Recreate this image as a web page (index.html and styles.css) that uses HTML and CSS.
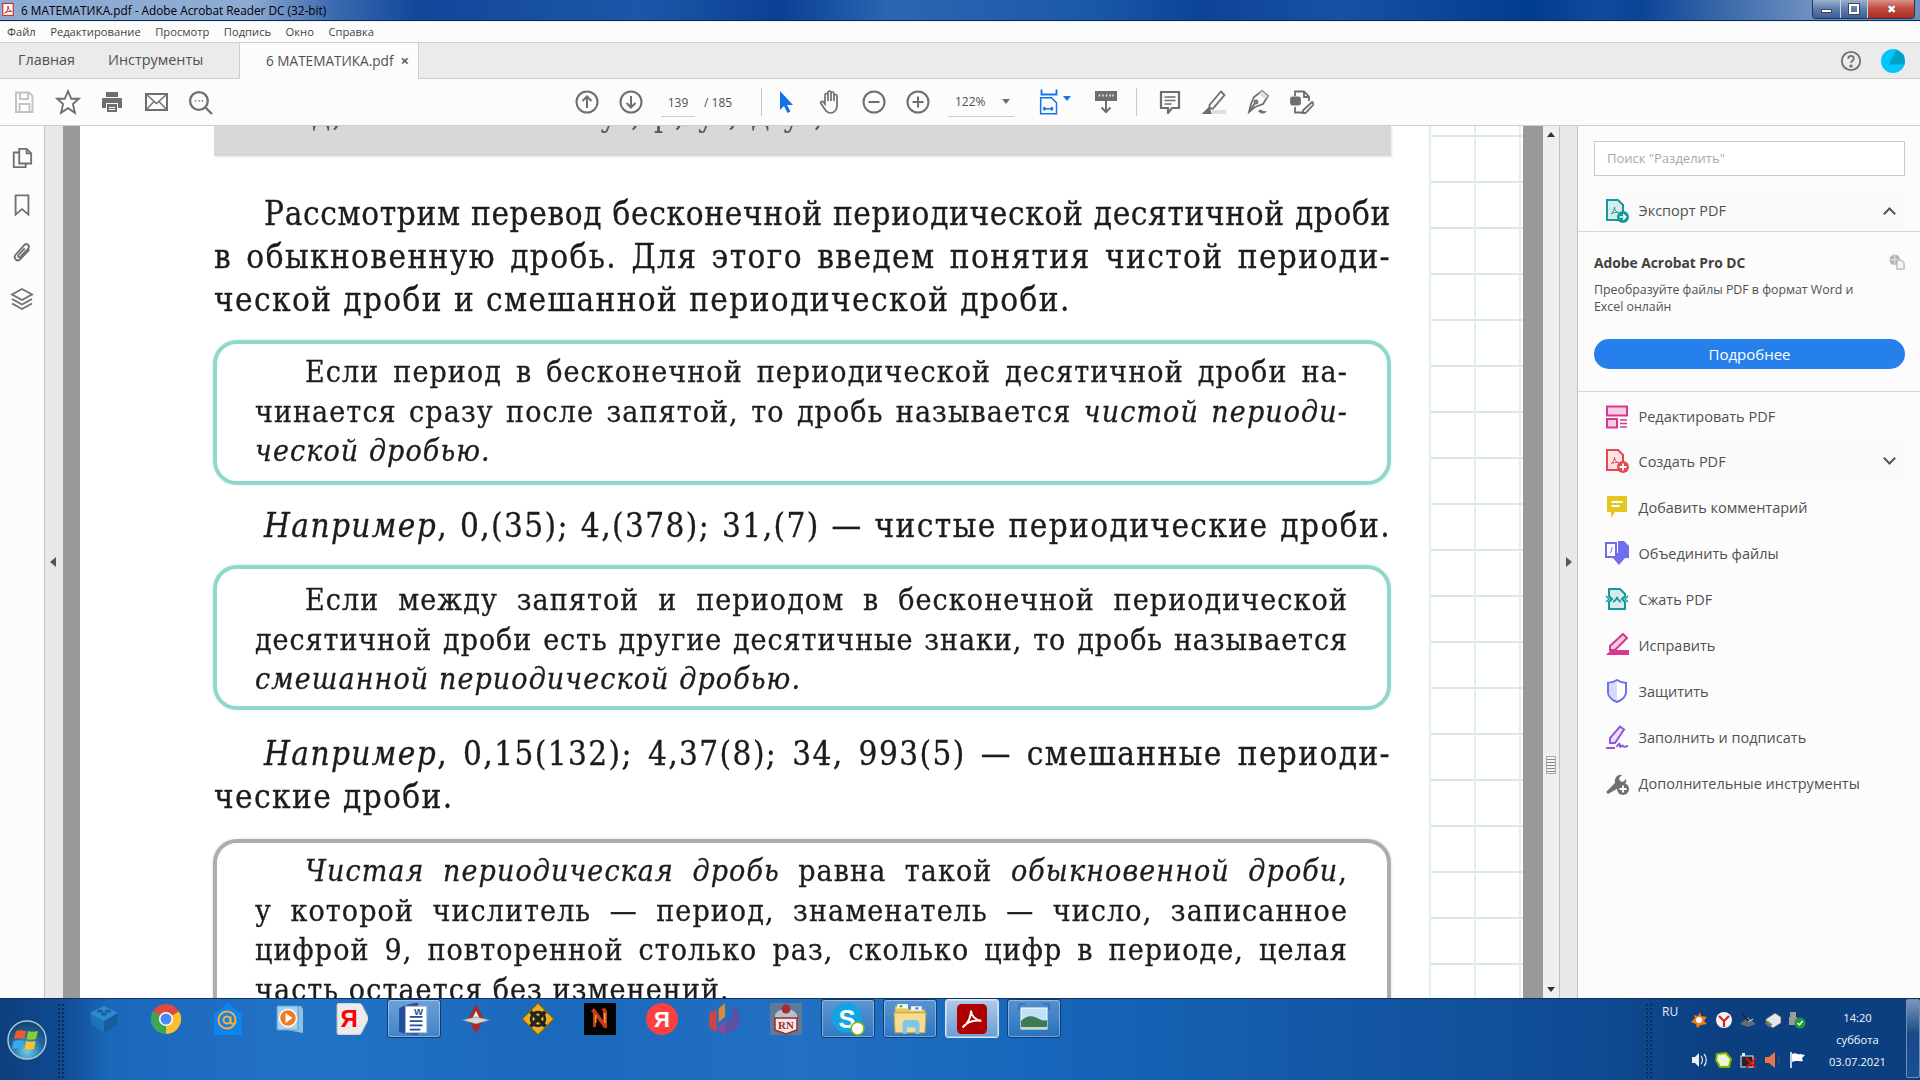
FILE: index.html
```html
<!DOCTYPE html>
<html lang="ru">
<head>
<meta charset="utf-8">
<title>6 МАТЕМАТИКА.pdf - Adobe Acrobat Reader DC (32-bit)</title>
<link rel="stylesheet" href="styles.css">
</head>
<body>
<div class="app">
  <header class="titlebar">
    <svg class="app-ico" viewBox="0 0 16 18" width="12" height="15"><rect x="1" y="1" width="14" height="16" fill="#fff" stroke="#c9302c" stroke-width="1.6"/><path d="M3.5 14c3-1.500 5-6 4.500-9.500 0 3.500 2 6.500 5 7-3.500-.5-7 .5-9.500 2.500z" fill="none" stroke="#d01010" stroke-width="1.200"/></svg>
    <span class="title-text">6 МАТЕМАТИКА.pdf - Adobe Acrobat Reader DC (32-bit)</span>
    <div class="winctl">
      <span class="wbtn wmin"><i class="min-glyph"></i></span>
      <span class="wbtn wmax"><i class="max-glyph"></i></span>
      <span class="wbtn wclose">✖</span>
    </div>
  </header>
  <nav class="menubar">
    <span>Файл</span><span>Редактирование</span><span>Просмотр</span><span>Подпись</span><span>Окно</span><span>Справка</span>
  </nav>
  <div class="tabs">
    <span class="tab tab-home">Главная</span>
    <span class="tab tab-tools">Инструменты</span>
    <span class="tab-active"><span>6 МАТЕМАТИКА.pdf</span><b class="tab-x">×</b></span>
    <span class="tabs-right">
      <svg viewBox="0 0 24 24" width="22" height="22" fill="none" stroke="#707070" stroke-width="2"><circle cx="12" cy="12" r="10"/><path d="M9 9.500c0-4 6-4 6 0 0 2-3 2.500-3 4.500" stroke-width="1.900"/><circle cx="12" cy="17.500" r=".8" fill="#707070"/></svg>
      <svg class="avatar" viewBox="0 0 24 24" width="24" height="24"><circle cx="12" cy="12" r="12" fill="#00c8ff"/><path d="M15 0.500 L23 6 24 15.500 8 15.500z" fill="#00a0c8"/></svg>
    </span>
  </div>
  <div class="toolbar">
    <div class="tb-btn"><svg viewBox="0 0 24 24" width="24" height="24" fill="none" stroke="#c4c4c4" stroke-width="2"><path d="M4 2.500h13l3.500 3.500v16H4z"/><path d="M8 3v6h8V3M7.500 22v-8h10v8"/></svg></div>
    <div class="tb-btn"><svg viewBox="0 0 24 24" width="26" height="26" fill="none" stroke="#6e6e6e" stroke-width="1.700"><path d="M12 2l3 7h7l-5.500 5 2 8-6.500-4.300L5.500 22l2-8L2 9h7z"/></svg></div>
    <div class="tb-btn"><svg viewBox="0 0 24 24" width="24" height="24" fill="#6e6e6e"><path d="M6 2h12v5H6z"/><path d="M3 8h18a1 1 0 0 1 1 1v9h-4v-5H6v5H2V9a1 1 0 0 1 1-1z"/><path d="M7 14h10v8H7zM9 17h6v1H9zM9 19h6v1H9z" fill-rule="evenodd"/></svg></div>
    <div class="tb-btn"><svg viewBox="0 0 24 24" width="25" height="24" fill="none" stroke="#6e6e6e" stroke-width="2"><rect x="1.500" y="4" width="21" height="16"/><path d="M2 4.500l10 9 10-9M2 19.500l7.500-8M22 19.500l-7.500-8" stroke-width="1.400"/></svg></div>
    <div class="tb-btn"><svg viewBox="0 0 24 24" width="25" height="25" fill="none" stroke="#6e6e6e" stroke-width="2.200"><circle cx="10.500" cy="10.500" r="8.500"/><path d="M17 17l6 6"/><path d="M6.500 10.500h1.500M10 10.500h1.500M13 10.500h1.500" stroke-width="1.300"/></svg></div>
    <div class="tb-spacer-a"></div>
    <div class="tb-btn"><svg viewBox="0 0 24 24" width="24" height="24" fill="none" stroke="#6e6e6e" stroke-width="2"><circle cx="12" cy="12" r="10.500"/><path d="M12 18V6.500M7.500 11L12 6.500l4.500 4.500"/></svg></div>
    <div class="tb-btn"><svg viewBox="0 0 24 24" width="24" height="24" fill="none" stroke="#6e6e6e" stroke-width="2"><circle cx="12" cy="12" r="10.500"/><path d="M12 6v11.500M7.500 13l4.500 4.500 4.500-4.500"/></svg></div>
    <div class="page-field"><span class="page-num">139</span><span class="page-total">/ 185</span></div>
    <div class="tb-sep sep-a"></div>
    <div class="tb-btn"><svg viewBox="0 0 24 24" width="24" height="24" fill="#1473e6"><path d="M6 1l13 14h-6l3.500 6.500-3 1.500-3.500-7L6 20z"/></svg></div>
    <div class="tb-btn"><svg viewBox="0 0 24 26" width="24" height="26" fill="none" stroke="#6e6e6e" stroke-width="1.700"><path d="M7 15V6a1.500 1.500 0 0 1 3 0v6V3.500a1.500 1.500 0 0 1 3 0V12 4.500a1.500 1.500 0 0 1 3 0V12 7a1.500 1.500 0 0 1 3 0v10c0 4-3 7-6.500 7S8 22 6 19l-3-4.500c-1-1.500 1-3 2.500-1.500z"/></svg></div>
    <div class="tb-btn"><svg viewBox="0 0 24 24" width="24" height="24" fill="none" stroke="#6e6e6e" stroke-width="2"><circle cx="12" cy="12" r="10.500"/><path d="M6.500 12h11"/></svg></div>
    <div class="tb-btn"><svg viewBox="0 0 24 24" width="24" height="24" fill="none" stroke="#6e6e6e" stroke-width="2"><circle cx="12" cy="12" r="10.500"/><path d="M6.500 12h11M12 6.500v11"/></svg></div>
    <div class="zoom-field"><span>122%</span><i class="caret"></i></div>
    <div class="tb-fit"><svg viewBox="0 0 24 30" width="20" height="26" fill="none" stroke="#1473e6" stroke-width="2.200"><path d="M3 0v6h18V0"/><path d="M2 10h13l6 6v13H2zM5 23h12M5 23l2.500-2M5 23l2.500 2M17 23l-2.500-2M17 23l-2.500 2" stroke-width="1.800"/></svg><i class="caret blue"></i></div>
    <div class="tb-btn tb-ruler"><svg viewBox="0 0 24 24" width="24" height="24" fill="none" stroke="#6e6e6e" stroke-width="2"><rect x="2" y="2" width="20" height="8" fill="#6e6e6e"/><path d="M5.500 4.500v2M9 4.500v2M12.500 4.500v2M16 4.500v2M19 4.500v2" stroke="#fff" stroke-width="1.300"/><path d="M12 11v11M7.500 17.500L12 22l4.500-4.500"/></svg></div>
    <div class="tb-sep sep-b"></div>
    <div class="tb-btn"><svg viewBox="0 0 24 24" width="24" height="24" fill="none" stroke="#6e6e6e" stroke-width="2.200"><path d="M3 2h18v16h-7l-4 5v-5H3z"/><path d="M6.500 7h11M6.500 10.500h11M6.500 14h7" stroke-width="1.300"/></svg></div>
    <div class="tb-btn"><svg viewBox="0 0 24 24" width="24" height="24" fill="none" stroke="#6e6e6e" stroke-width="1.800"><path d="M19 1.500l3.500 3.500L11 18.500H7.500V15z"/><path d="M2 23l5-5 1.500 5z" fill="#6e6e6e"/><rect x="10" y="20" width="14" height="4" fill="#dedede" stroke="none"/></svg></div>
    <div class="tb-btn"><svg viewBox="0 0 24 24" width="24" height="24" fill="none" stroke="#6e6e6e" stroke-width="1.800"><path d="M16 1l6 5-5 8-8 3-6 5 2-8 3-7z"/><circle cx="10" cy="12" r="1.500"/><path d="M3 22L9 13M13 22c1-2 2-2 2 0s2-2 2 0 2-1 3 0"/><path d="M16 1l6 5-3 3-6-5z" fill="#dedede" stroke="none"/></svg></div>
    <div class="tb-btn"><svg viewBox="0 0 24 24" width="24" height="24" fill="none" stroke="#6e6e6e" stroke-width="1.800"><path d="M5 6V1.500h9l5 5V11M5 17v5.500h8"/><path d="M14 1.500V7h5"/><rect x="1" y="7.500" width="9" height="7" rx="1.500" fill="#6e6e6e"/><path d="M22 12l2 2-8.500 9H13v-2.500z"/></svg></div>
  </div>

  <main class="workspace">
    <aside class="rail">
      <svg viewBox="0 0 24 24" width="22" height="24" fill="none" stroke="#707070" stroke-width="2"><path d="M9 2h8l5 5v11H9z"/><path d="M17 2v5h5"/><path d="M9 6H3v16h13v-4"/></svg>
      <svg viewBox="0 0 24 24" width="22" height="24" fill="none" stroke="#707070" stroke-width="2"><path d="M5 1.500h14v21l-7-6-7 6z"/></svg>
      <svg viewBox="0 0 24 24" width="22" height="24" fill="none" stroke="#707070" stroke-width="2"><path d="M20 9.500L10 20c-3 3-8-1-5-5L15 4c2-2 6 1 4 4l-9 9.500c-1 1-3-.5-2-2l7-7.500"/></svg>
      <svg viewBox="0 0 24 24" width="24" height="24" fill="none" stroke="#707070" stroke-width="1.800"><path d="M12 2l10 5.500-10 5.500L2 7.500z"/><path d="M2 12l10 5.500L22 12M2 16.500L12 22l10-5.500"/></svg>
    </aside>
    <div class="gutter-left"><i class="arrow-left"></i></div>
    <div class="bar-gray"></div>
    <div class="page-view">
      <div class="page-col">
        <div class="top-box"><div class="clip-line"><span class="clip-a">д,</span><span>у , р, у , д у ,</span></div></div>
        <div class="para first-para">
          <div class="ln ind tight">Рассмотрим перевод бесконечной периодической десятичной дроби</div>
          <div class="ln">в обыкновенную дробь. Для этого введем понятия чистой периоди-</div>
          <div class="ln left">ческой дроби и смешанной периодической дроби.</div>
        </div>
        <section class="rule teal r1">
          <div class="bl ind2">Если период в бесконечной периодической десятичной дроби на-</div>
          <div class="bl">чинается сразу после запятой, то дробь называется <em>чистой периоди-</em></div>
          <div class="bl left"><em>ческой дробью.</em></div>
        </section>
        <div class="para ex1"><div class="ln ind"><em>Например</em>, 0,(35); 4,(378); 31,(7) — чистые периодические дроби.</div></div>
        <section class="rule teal r2">
          <div class="bl ind2">Если между запятой и периодом в бесконечной периодической</div>
          <div class="bl snug">десятичной дроби есть другие десятичные знаки, то дробь называется</div>
          <div class="bl left"><em>смешанной периодической дробью.</em></div>
        </section>
        <div class="para ex2">
          <div class="ln ind"><em>Например</em>, 0,15(132); 4,37(8); 34, 993(5) — смешанные периоди-</div>
          <div class="ln left">ческие дроби.</div>
        </div>
        <section class="rule gray r3">
          <div class="bl ind2"><em>Чистая периодическая дробь</em> равна такой <em>обыкновенной дроби</em>,</div>
          <div class="bl">у которой числитель — период, знаменатель — число, записанное</div>
          <div class="bl">цифрой 9, повторенной столько раз, сколько цифр в периоде, целая</div>
          <div class="bl left">часть остается без изменений.</div>
        </section>
      </div>
      <div class="grid-paper"></div>
    </div>
    <div class="bar-gray bar-right"></div>
    <div class="scrollbar">
      <i class="sc-up"></i>
      <i class="sc-thumb"></i>
      <i class="sc-down"></i>
    </div>
    <div class="gutter-right"><i class="arrow-right"></i></div>
    <aside class="panel">
      <div class="search">Поиск "Разделить"</div>
      <div class="row accent export">
        <svg class="pi" viewBox="0 0 24 24" width="24" height="24"><path d="M2 1h11l5 5v15H2z" fill="#d5ecea" stroke="#159a9c" stroke-width="2"/><path d="M6 15c2-1.500 3.500-4 3.500-7 0 3 1.500 5 4 5.500-3-.3-5.500 0-7.500 1.500z" fill="none" stroke="#159a9c"/><circle cx="18" cy="18" r="6" fill="#159a9c"/><path d="M14.500 18h6M18 15.300l2.800 2.700-2.800 2.700" fill="none" stroke="#fff" stroke-width="1.500"/></svg>
        <span>Экспорт PDF</span><i class="chev up"></i>
      </div>
      <div class="promo">
        <div class="promo-head"><strong>Adobe Acrobat Pro DC</strong>
          <svg viewBox="0 0 18 18" width="16" height="16"><circle cx="6.500" cy="6.500" r="6" fill="#b5b5b5"/><path d="M1 6.500h11M6.500 1v11" stroke="#eee"/><path d="M9 7h5l3 3v7H9z" fill="#f4f4f4" stroke="#b0b0b0" stroke-width="1.300"/></svg>
        </div>
        <p class="promo-text">Преобразуйте файлы PDF в формат Word и<br>Excel онлайн</p>
        <div class="cta">Подробнее</div>
      </div>
      <div class="tools">
        <div class="row first-row"><svg class="pi" viewBox="0 0 24 24" width="24" height="24" fill="none" stroke="#d83790" stroke-width="2"><rect x="2" y="1.500" width="20" height="9" fill="#f6cfe4"/><rect x="2" y="14" width="10" height="8.500" fill="#f6cfe4"/><path d="M15 15h7M15 18.500h7M15 22h7" stroke-width="1.300"/></svg><span>Редактировать PDF</span></div>
        <div class="row accent"><svg class="pi" viewBox="0 0 24 24" width="24" height="24"><path d="M2 1h11l5 5v15H2z" fill="#fbe4e5" stroke="#e34850" stroke-width="2"/><path d="M6 15c2-1.500 3.500-4 3.500-7 0 3 1.500 5 4 5.500-3-.3-5.500 0-7.500 1.500z" fill="none" stroke="#e34850"/><circle cx="18" cy="18" r="6" fill="#e34850"/><path d="M14.500 18h7M18 14.500v7" stroke="#fff" stroke-width="1.800"/></svg><span>Создать PDF</span><i class="chev down"></i></div>
        <div class="row"><svg class="pi" viewBox="0 0 24 24" width="24" height="24"><path d="M2 1h20v16H10l-4 6v-6H2z" fill="#e5c51f"/><path d="M6.500 7h11M6.500 11h8" stroke="#fff" stroke-width="2"/></svg><span>Добавить комментарий</span></div>
        <div class="row"><svg class="pi" viewBox="0 0 24 24" width="24" height="24"><path d="M1 2h10v14H1z" fill="#fff" stroke="#6e6ef0" stroke-width="2"/><path d="M13 0h6l5 5v12H13z" fill="#6e6ef0"/><path d="M5 12c1-1 2-3 2-6" fill="none" stroke="#6e6ef0"/><path d="M11 12h6v5h3l-6 7-6-7h3z" fill="#6e6ef0"/></svg><span>Объединить файлы</span></div>
        <div class="row"><svg class="pi" viewBox="0 0 24 24" width="24" height="24" fill="none" stroke="#159a9c" stroke-width="2"><path d="M4 9V2h11l5 5v2l-3 3 3 3v7H4v-7l3-3z" fill="#d5ecea"/><path d="M8 15c2-1 3.500-2.500 4-5 .5 2.500 2 4 4 5M1 9l3 3-3 3M23 9l-3 3 3 3" stroke-width="1.500"/></svg><span>Сжать PDF</span></div>
        <div class="row"><svg class="pi" viewBox="0 0 24 24" width="24" height="24"><path d="M18 1l4 4L10 17H5v-4z" fill="#f6cfe4" stroke="#d83790" stroke-width="2"/><path d="M1 22l5-5h18v5z" fill="#d83790"/></svg><span>Исправить</span></div>
        <div class="row"><svg class="pi" viewBox="0 0 24 24" width="24" height="24"><path d="M12 1c3 2 6 3 9 3v9c0 5-4 8-9 10-5-2-9-5-9-10V4c3 0 6-1 9-3z" fill="#fff" stroke="#6e6ef0" stroke-width="2"/><path d="M12 2.500v19c-4.500-2-8-4.500-8-8.500V5c3 0 5.500-1 8-2.500z" fill="#d9d9fb"/></svg><span>Защитить</span></div>
        <div class="row"><svg class="pi" viewBox="0 0 24 24" width="24" height="24" fill="none" stroke="#9256d9" stroke-width="2"><path d="M15 1.500l4 3L10 18H5v-5z" fill="#ecdffa"/><path d="M1 23h9M12 22c1-4 3-4 3-1s2-2 3 0 3 0 5 0"/></svg><span>Заполнить и подписать</span></div>
        <div class="row"><svg class="pi" viewBox="0 0 24 24" width="24" height="24" fill="#707070"><path d="M3 23l-2-2 9-9c-1-4 2-9 7-8l-3 3 1 3 3 1 3-3c1 3-1 6-4 7z"/><circle cx="18" cy="18" r="6"/><path d="M14.500 18h7M18 14.500v7" stroke="#fff" stroke-width="1.800"/></svg><span>Дополнительные инструменты</span></div>
      </div>
    </aside>
  </main>

  <footer class="taskbar">
    <div class="start">
      <svg viewBox="0 0 40 40" width="40" height="40"><defs><radialGradient id="orb" cx=".5" cy=".8" r=".75"><stop offset="0" stop-color="#6fd0ea"/><stop offset=".55" stop-color="#1e6c9f"/><stop offset="1" stop-color="#14456f"/></radialGradient></defs><circle cx="20" cy="20" r="19" fill="url(#orb)" stroke="#a8c6d8" stroke-width="1.500"/><path d="M9 11c3-1 6-1 10 0l-1.500 8c-3-1-7-1-10.500 0z" fill="#f0592c"/><path d="M21 11c3 1 7 1 10 0l-2 8c-3 1-7 1-9.500 0z" fill="#8ccb34"/><path d="M6.500 21c3-1 7-1 10.500 0l-1.500 8c-3-1-7-1-10.500 0z" fill="#3aa9e8"/><path d="M19 21c3 1 6 1 9.500 0l-1.500 8c-3 1-7 1-9.500 0z" fill="#fcc22c"/></svg>
    </div>
    <i class="gripper"></i>
    <div class="pins">
      <div class="pin"><svg viewBox="0 0 32 32" width="32" height="32"><path d="M2 10l14-7 14 7-1 12-13 8-12-8z" fill="#1e74b8"/><path d="M2 10l14 8 14-8-14-7z" fill="#2b8ad0"/><path d="M16 18v12l13-8 1-12z" fill="#175d9a"/><ellipse cx="12" cy="8" rx="3" ry="1.500" fill="#175d9a"/><ellipse cx="20" cy="8" rx="3" ry="1.500" fill="#175d9a"/><ellipse cx="16" cy="11" rx="3" ry="1.500" fill="#175d9a"/></svg></div>
      <div class="pin"><svg viewBox="0 0 32 32" width="32" height="32"><circle cx="16" cy="16" r="15" fill="#dd4b3e"/><path d="M16 16L29 8.500A15 15 0 0 1 16 31z" fill="#fbc02d"/><path d="M16 16L16 31A15 15 0 0 1 3 8.500z" fill="#3aa757"/><circle cx="16" cy="16" r="7" fill="#fff"/><circle cx="16" cy="16" r="5.500" fill="#4a8af4"/></svg></div>
      <div class="pin"><svg viewBox="0 0 32 32" width="32" height="34"><path d="M16 0l15 12h-1v20H2V12H1z" fill="#0b84f2"/><circle cx="15" cy="17" r="8.500" fill="none" stroke="#ffa930" stroke-width="2"/><circle cx="15" cy="17" r="3.500" fill="none" stroke="#ffa930" stroke-width="2"/><path d="M18.500 13.500v5c0 3 4 3 5 0" fill="none" stroke="#ffa930" stroke-width="2"/></svg></div>
      <div class="pin"><svg viewBox="0 0 32 32" width="32" height="32"><path d="M7 3h20l2 3v24l-22-4z" fill="#8fc0e4"/><path d="M3 3h21v24H3z" fill="#a8d3ef" stroke="#5d9ccb"/><circle cx="14" cy="15" r="8.500" fill="#ef7a22" stroke="#fff" stroke-width="1.500"/><path d="M11.500 10l7 5-7 5z" fill="#fff"/></svg></div>
      <div class="pin"><svg viewBox="0 0 32 32" width="32" height="32"><path d="M3 0h19c2 0 3 1 4 2l6 12c.5 1 .5 2 0 3l-6 12c-1 2-2 3-4 3H3a2 2 0 0 1-2-2V2a2 2 0 0 1 2-2z" fill="#ececec" stroke="#bbb"/><text x="13" y="24" class="ya-text">Я</text></svg></div>
      <div class="pin pin-btn word"><svg viewBox="0 0 32 32" width="36" height="34"><path d="M2 6c5-3 12-5 18-5v30C13 31 7 30 2 28z" fill="#244b9c"/><path d="M8 4h20v25H8z" fill="#fff" stroke="#9fb7d8"/><path d="M12 14h12M12 18h12M12 22h12M12 26h10" stroke="#244b9c" stroke-width="1.500"/><text x="16" y="12" class="w-text">W</text></svg></div>
      <div class="pin"><svg viewBox="0 0 32 32" width="32" height="32"><path d="M16 1l8 15-8 15-8-15z" fill="#a72a2e"/><path d="M16 8l4 8H12z" fill="#eee"/><path d="M2 17l14-3 14 3-14 4z" fill="#d6d6d6" stroke="#777" stroke-width=".6"/></svg></div>
      <div class="pin"><svg viewBox="0 0 32 32" width="34" height="34"><path d="M16 1l15 15-15 15L1 16z" fill="#e8b021" stroke="#7a5d10"/><path d="M9 9l14 14M23 9L9 23" stroke="#222" stroke-width="3.500"/><circle cx="16" cy="16" r="6.500" fill="none" stroke="#222" stroke-width="2.500"/></svg></div>
      <div class="pin"><svg viewBox="0 0 32 32" width="32" height="32"><rect width="32" height="32" fill="#040404"/><path d="M9 24V10l-2-2 3-3 9 12V8l-2-2 4-1 2 3v17h-3l-8-11v10z" fill="#c63c14"/><path d="M20 10h1.500v10H20zM11 12h1.500v8H11z" fill="#f0a030"/></svg></div>
      <div class="pin"><svg viewBox="0 0 32 32" width="32" height="32"><circle cx="16" cy="16" r="16" fill="#fc3f3f"/><text x="16" y="24" class="ya-white">Я</text></svg></div>
      <div class="pin"><svg viewBox="0 0 32 32" width="34" height="34"><path d="M9 7v22L2 24V10z" fill="#c9454c"/><path d="M11 6l6-5v13l-6 5z" fill="#d68a3c"/><path d="M18 19l6-5V4l6 5v14l-12 8z" fill="#5f4fa1"/><path d="M11 22l6-4v13l-6-3z" fill="#8a4a9a"/></svg></div>
      <div class="pin"><svg viewBox="0 0 32 32" width="32" height="32"><rect width="32" height="32" fill="#5d7a99"/><path d="M5 12c2-4 6-6 11-6s9 2 11 6v3H5z" fill="#b8c2cc"/><circle cx="16" cy="6" r="4.500" fill="#ab2b2e"/><path d="M5 15h22v12l-11 4-11-4z" fill="#f2ebe5" stroke="#a3262c" stroke-width="1.500"/><text x="16" y="26" class="rn-text">RN</text></svg></div>
      <div class="pin pin-btn"><svg viewBox="0 0 32 32" width="34" height="34"><circle cx="15" cy="15" r="14" fill="#12a5e6"/><text x="15" y="24" class="s-text">S</text><circle cx="25" cy="25" r="6" fill="#fff" stroke="#7fba00" stroke-width="1.500"/></svg></div>
      <div class="pin pin-btn"><svg viewBox="0 0 32 32" width="36" height="34"><path d="M2 4h11l2 3h15v20H2z" fill="#e8c860"/><path d="M4 2h10v4H4z" fill="#fff"/><path d="M6 3h3v2H6z" fill="#3ab53a"/><path d="M17 4h10v4H17z" fill="#f8f8f8"/><path d="M21 5h3v2h-3z" fill="#2a90e0"/><path d="M1 10h30l-1 19H2z" fill="#f5dc8e" stroke="#c9a84a"/><path d="M9 30v-9c0-3 2-4 4-4h8c2 0 4 1 4 4v9h-4v-6H13v6z" fill="#7ec7ea"/></svg></div>
      <div class="pin pin-btn active"><svg viewBox="0 0 32 32" width="30" height="30"><rect width="32" height="32" rx="5" fill="#af0000"/><path d="M6 25c5-3 9-11 9-18 0 5 4 10 11 11-7-1-15 1-20 7z" fill="none" stroke="#fff" stroke-width="2.200"/></svg></div>
      <div class="pin pin-btn"><svg viewBox="0 0 32 32" width="32" height="32"><path d="M1 1h6M1 1v6M31 1h-6M31 1v6M1 31h6M1 31v-6M31 31h-6M31 31v-6" stroke="#3679ac" stroke-width="2" fill="none"/><rect x="3" y="5" width="26" height="21" fill="#bfe1f5" stroke="#fff"/><path d="M3 18c5-5 10-6 16-3s8 3 10 2v9H3z" fill="#3d7a56"/><path d="M3 24h26v2H3z" fill="#cfd8c8"/></svg></div>
    </div>
    <div class="tray">
      <i class="gripper tray-grip"></i>
      <span class="lang">RU</span>
      <div class="tray-icons">
        <svg viewBox="0 0 18 18" width="18" height="18"><path d="M10 1l1 4 6 1-3 4 3 3-6 1-4 3-1-4-5-2 4-4-1-3 4 1z" fill="#f47a14"/><circle cx="9" cy="9" r="3" fill="#fff"/></svg>
        <svg viewBox="0 0 18 18" width="18" height="18"><circle cx="9" cy="9" r="8" fill="#f4f4f4"/><path d="M4 5l5 5 5-5M9 10v6" fill="none" stroke="#e02020" stroke-width="2.200"/></svg>
        <svg viewBox="0 0 18 18" width="18" height="18"><path d="M1 13l8-7 8 7-8 3z" fill="#5c6d80"/><path d="M3 2l7 9" stroke="#222" stroke-width="1.500"/><path d="M9 11l5-3" stroke="#ddd"/></svg>
        <svg viewBox="0 0 18 18" width="18" height="18"><path d="M2 8l9-6 6 4v6l-8 5-7-4z" fill="#e8e8e8" stroke="#555" stroke-width=".8"/><path d="M1 12l5 4" stroke="#2a70e0" stroke-width="1.200"/><path d="M2 11l5 4" stroke="#d82020" stroke-width="1.200"/><path d="M3 10l5 4" stroke="#20b020" stroke-width="1.200"/></svg>
        <svg viewBox="0 0 18 18" width="18" height="18"><path d="M2 1h6v5h1v8H1V6h1z" fill="#9a9a9a"/><circle cx="12" cy="12" r="5.500" fill="#1d9a3a"/><path d="M9.500 12l2 2 3-4" fill="none" stroke="#fff" stroke-width="1.400"/></svg>
        <svg viewBox="0 0 18 18" width="18" height="18"><path d="M2 6h3l4-4v14l-4-4H2z" fill="#eee"/><path d="M11 5c2 2 2 6 0 8M14 3c3 3 3 9 0 12" fill="none" stroke="#dfe8f0" stroke-width="1.200"/></svg>
        <svg viewBox="0 0 18 18" width="18" height="18"><path d="M2 3l9-1 5 6-2 8-9 0-4-7z" fill="#eef3d0" stroke="#7fb000" stroke-width="2"/></svg>
        <svg viewBox="0 0 18 18" width="18" height="18"><rect x="2" y="5" width="12" height="11" fill="#223" stroke="#eee"/><path d="M3 2h3v3H3z" fill="#eee"/><path d="M7 7l10 10M17 7L7 17" stroke="#e01010" stroke-width="2"/></svg>
        <svg viewBox="0 0 18 18" width="18" height="18"><path d="M1 6h4l6-5v16l-6-5H1z" fill="#e9744a"/><path d="M14 5c1.500 2 1.500 6 0 8" fill="none" stroke="#38507a" stroke-width="1.200"/></svg>
        <svg viewBox="0 0 18 18" width="18" height="18"><path d="M3 1v16" stroke="#fff" stroke-width="1.500"/><path d="M4 3c4-2 5 1 8 0l5 1-3 3 1 3c-4 1-6-1-11 1z" fill="#fff"/></svg>
      </div>
      <div class="clock"><span>14:20</span><span>суббота</span><span>03.07.2021</span></div>
      <i class="show-desktop"></i>
    </div>
  </footer>
</div>
</body>
</html>
```
FILE: styles.css
```css
* { box-sizing: border-box; }
html, body { margin: 0; height: 100%; overflow: hidden; }
body { font-family: "Open Sans", "Noto Sans", sans-serif; background: #fff; color: #505050; }
.app { display: flex; flex-direction: column; width: 1920px; height: 1080px; overflow: hidden; }
i { display: block; font-style: normal; }

.titlebar {
  height: 22px; flex: none; display: flex; align-items: center; padding: 0 3px 2px 2px; gap: 7px;
  border-bottom: 1px solid #e8eef6;
  box-shadow: inset 0 -1px 0 #0b2a55;
  background: linear-gradient(90deg, #8eabd3 0, #8eabd3 250px, #3a69ae 335px, #11479a 420px, #1d56a8 640px, #0a4094 780px, #2c66b2 890px, #1b58a8 1090px, #0c4398 1200px, #1850a4 1340px, #003c92 1530px, #104a9e 1600px, #0a4396 1640px, #6d90c0 1810px);
}
.app-ico { flex: none; }
.title-text { font-size: 11.8px; color: #000; white-space: nowrap; }
.winctl { margin-left: auto; display: flex; height: 20px; margin-top: -1px; margin-right: 2px; align-self: flex-start; border: 1px solid #24365c; border-top: 0; border-radius: 0 0 4px 4px; overflow: hidden; }
.wbtn { display: flex; align-items: center; justify-content: center; height: 19px; color: #fff; font-size: 11px; border-left: 1px solid #c6d3e6; }
.wmin { width: 27px; border-left: 0; background: linear-gradient(#a4b7d4, #5f7fae 50%, #3a5f97); }
.wmax { width: 27px; background: linear-gradient(#a4b7d4, #5f7fae 50%, #3a5f97); }
.wclose { width: 47px; background: linear-gradient(#d99b94, #c24a3d 50%, #a92d22); text-shadow: 0 0 1px #333; }
.min-glyph { width: 11px; height: 4px; background: #fff; border: 1px solid #445; margin-top: 5px; }
.max-glyph { width: 10px; height: 10px; background: transparent; border: 2px solid #fff; box-shadow: 0 0 0 1px #445; }

.menubar { height: 21px; flex: none; display: flex; align-items: center; gap: 14.5px; padding: 0 0 2px 7px; background: #fcfcfc; border-bottom: 1px solid #cfcfcf; font-size: 11.2px; color: #444; }
.tabs { height: 36px; flex: none; display: flex; align-items: stretch; background: #ebebeb; border-bottom: 1px solid #cdcdcd; font-size: 14.4px; color: #505050; }
.tab { display: flex; align-items: center; padding-bottom: 2px; }
.tab-home { margin-left: 18px; width: 90px; }
.tab-tools { width: 131px; }
.tab-active { width: 180px; background: #fcfcfc; border-left: 1px solid #cdcdcd; border-right: 1px solid #cdcdcd; margin-bottom: -1px; display: flex; align-items: center; padding: 0 0 2px 26px; gap: 7px; white-space: nowrap; font-size: 13.6px; }
.tab-x { font-size: 15px; color: #606060; }
.tabs-right { margin-left: auto; display: flex; align-items: center; gap: 19px; padding-right: 15px; }

.toolbar { height: 47px; flex: none; display: flex; align-items: center; padding-left: 2px; background: #fcfcfc; border-bottom: 1px solid #cdcdcd; }
.tb-btn { width: 44px; height: 46px; display: flex; align-items: center; justify-content: center; flex: none; }
.tb-spacer-a { width: 343px; flex: none; }
.tb-sep { width: 1px; height: 28px; background: #c8c8c8; flex: none; }
.sep-a { margin-right: 2px; }
.sep-b { margin-left: 8px; margin-right: 11px; }
.page-field { width: 108px; display: flex; align-items: center; font-size: 12px; color: #505050; gap: 9px; padding-left: 8px; flex: none; }
.page-num { width: 34px; height: 29px; line-height: 29px; text-align: center; border-bottom: 1px solid #cdcdcd; }
.zoom-field { width: 66px; height: 29px; margin-left: 8px; border-bottom: 1px solid #cdcdcd; display: flex; align-items: center; justify-content: space-between; padding: 0 4px 0 7px; font-size: 12px; flex: none; }
.caret { width: 0; height: 0; border-left: 4px solid transparent; border-right: 4px solid transparent; border-top: 5px solid #707070; }
.caret.blue { border-top-color: #1473e6; margin-bottom: 8px; }
.tb-fit { margin-left: 25px; width: 38px; display: flex; align-items: center; gap: 4px; flex: none; }
.tb-ruler { margin-left: 7px; }

.workspace { flex: 1; min-height: 0; display: flex; }
.rail { width: 45px; flex: none; background: #fcfcfc; border-right: 1px solid #c0c0c0; display: flex; flex-direction: column; align-items: center; padding-top: 20px; gap: 23px; }
.rail svg { margin-right: 1px; }
.gutter-left { width: 18px; flex: none; background: #e8e8e8; display: flex; align-items: center; justify-content: center; padding-right: 2px; }
.arrow-left { border-top: 5px solid transparent; border-bottom: 5px solid transparent; border-right: 6px solid #555; }
.bar-gray { width: 17px; flex: none; background: #999; }
.bar-right { width: 20px; }

.page-view { width: 1443px; flex: none; background: #fff; display: flex; overflow: hidden; padding-left: 134px; filter: blur(.5px); }
.page-col { width: 1177px; flex: none; font-family: "DejaVu Serif Condensed", "DejaVu Serif", "Liberation Serif", serif; color: #1c1c1c; -webkit-text-stroke: .3px #1c1c1c; }
.grid-paper {
  width: 94px; margin-left: 38px; flex: none;
  background-color: #fff;
  background-image:
    linear-gradient(90deg, #e2f0ed 2px, transparent 2px),
    linear-gradient(#dbe7e4 2px, transparent 2px);
  background-size: 45px 100%, 100% 46px;
  background-position: 0 0, 0 9px;
}
.top-box { height: 30px; background: #d8d8d8; overflow: hidden; box-shadow: 1px 1px 2px #e6e6e6; }
.clip-line { font-size: 33px; line-height: 40px; margin-top: -31px; padding-left: 98px; white-space: nowrap; color: #555; letter-spacing: 2px; -webkit-text-stroke: 0; }
.clip-a { display: inline-block; width: 288px; }
.para { font-size: 33px; line-height: 43px; letter-spacing: 1.4px; }
.first-para { margin-top: 36px; }
.ex1 { margin-top: 19px; }
.ex2 { margin-top: 22px; }
.ln, .bl { text-align: justify; text-align-last: justify; white-space: nowrap; }
.ln.left, .bl.left { text-align-last: left; }
.ln.ind { padding-left: 50px; }
.ln.tight { letter-spacing: .65px; }
.bl { font-size: 30px; line-height: 39.5px; letter-spacing: 1.1px; }
.bl.snug { letter-spacing: .95px; }
.bl.ind2 { padding-left: 50px; }
.rule { margin-left: -1px; width: 1178px; border: 4px solid; border-radius: 24px; padding: 0 39px 0 38px; background: #fff; }
.teal { border-color: #92d8ca; box-shadow: 0 0 3px #cfeee8; }
.gray { border-color: #adadad; box-shadow: 0 0 3px #d8d8d8; }
.r1 { margin-top: 19px; height: 145px; padding-top: 8px; }
.r2 { margin-top: 18px; height: 145px; padding-top: 11px; }
.r3 { margin-top: 21px; height: 190px; padding-top: 8px; }

.scrollbar { width: 17px; flex: none; background: #efefef; border-right: 1px solid #c0c0c0; display: flex; flex-direction: column; align-items: center; padding: 6px 0 6px; }
.sc-up { border-left: 4px solid transparent; border-right: 4px solid transparent; border-bottom: 5px solid #333; }
.sc-thumb { width: 10px; height: 18px; margin-top: 619px; background: repeating-linear-gradient(#f4f4f4 0 2px, #888 2px 3px); border: 1px solid #aaa; }
.sc-down { margin-top: auto; border-left: 4px solid transparent; border-right: 4px solid transparent; border-top: 5px solid #333; }
.gutter-right { width: 18px; flex: none; background: #e8e8e8; border-right: 1px solid #c0c0c0; display: flex; align-items: center; justify-content: center; }
.arrow-right { border-top: 5px solid transparent; border-bottom: 5px solid transparent; border-left: 6px solid #555; }

.panel { flex: 1; background: #fcfcfc; font-size: 14.5px; color: #505050; min-width: 0; }
.search { height: 35px; margin: 15px 15px 0 16px; background: #fff; border: 1px solid #cacaca; padding-left: 12px; line-height: 33px; font-size: 13px; color: #a8a8a8; }
.row { height: 46px; display: flex; align-items: center; margin: 0 15px 0 16px; padding: 0 0 2px 11px; gap: 9.5px; white-space: nowrap; }
.row.accent { background: #fafafa; }
.pi { flex: none; }
.first-row { height: 45px; padding-bottom: 0; }
.export { height: 39px; margin-top: 16px; }
.chev { margin-left: auto; margin-right: 11px; width: 9px; height: 9px; border: solid #505050; border-width: 2px 0 0 2px; }
.chev.up { transform: rotate(45deg); margin-top: 5px; }
.chev.down { transform: rotate(225deg); margin-top: -5px; }
.promo { border-top: 1px solid #d8d8d8; border-bottom: 1px solid #d8d8d8; height: 161px; padding: 20px 15px 0 16px; }
.promo-head { display: flex; justify-content: space-between; align-items: center; height: 20px; }
.promo-head strong { font-size: 13.8px; color: #404040; }
.promo-text { margin: 9px 0 0; font-size: 12.35px; line-height: 17px; color: #505050; }
.cta { height: 30px; margin-top: 24px; border-radius: 15px; background: #2680eb; color: #fff; text-align: center; font-size: 15px; line-height: 30px; }
.tools { padding-top: 2px; }

.taskbar {
  height: 82px; flex: none; position: relative; display: flex; align-items: flex-start; color: #fff;
  border-top: 1px solid #12315a;
  background: linear-gradient(90deg, #0e3f7d 0, #104a90 60px, #1b68bb 110px, #2272c6 300px, #1a69bc 550px, #2170c2 800px, #1666bb 1040px, #1459a8 1300px, #0f4a92 1600px, #0c3f80 1720px, #0c3f80 1920px);
}
.start { width: 57px; flex: none; padding: 21px 0 0 7px; }
.gripper { width: 8px; height: 76px; margin-top: 4px; flex: none; background-image: radial-gradient(#0a2c57 1px, transparent 1.200px); background-size: 4px 4px; }
.pins { display: flex; flex: none; margin-left: 8px; }
.pin { width: 62px; height: 39px; flex: none; display: flex; align-items: center; justify-content: center; }
.pin-btn { position: relative; }
.pin-btn::before { content: ""; position: absolute; z-index: 0; top: 0; bottom: 0; left: 4px; right: 4px; border: 1px solid #0f3c72; border-radius: 3px; background: linear-gradient(rgba(255,255,255,.28), rgba(255,255,255,.08)); box-shadow: inset 0 0 0 1px rgba(255,255,255,.35); }
.pin-btn svg { position: relative; z-index: 1; }
.pin-btn.active::before { background: linear-gradient(rgba(255,255,255,.65), rgba(255,255,255,.35)); border-color: #dbe7f5; }
.word::before { background: linear-gradient(rgba(255,255,255,.35), rgba(255,255,255,.15)); }
.ya-text { font: bold 24px "Liberation Sans", sans-serif; fill: #f00; text-anchor: middle; }
.ya-white { font: bold 22px "Liberation Sans", sans-serif; fill: #fff; text-anchor: middle; }
.w-text { font: bold 9px "Liberation Sans", sans-serif; fill: #244b9c; }
.rn-text { font: bold 11px "Liberation Serif", serif; fill: #a3262c; text-anchor: middle; }
.s-text { font: bold 24px "Liberation Sans", sans-serif; fill: #fff; text-anchor: middle; }

.tray { margin-left: auto; width: 275px; height: 81px; flex: none; display: flex; align-items: flex-start; }
.tray-grip { margin-right: 9px; }
.lang { font-size: 12px; width: 20px; margin-top: 4px; color: #e4edf8; flex: none; }
.tray-icons { display: grid; grid-template-columns: repeat(5, 18px); column-gap: 6.500px; row-gap: 22px; margin: 12px 0 0 8px; flex: none; }
.clock { width: 97px; flex: none; margin: 8px 0 0 3px; display: flex; flex-direction: column; align-items: center; font-size: 11.2px; line-height: 22px; color: #f4f8fc; }
.show-desktop { width: 14px; height: 79px; flex: none; margin-left: auto; border: 1px solid #6f8fb5; border-radius: 2px; background: linear-gradient(rgba(255,255,255,.45), rgba(255,255,255,.05) 45%, rgba(30,90,170,.6)); }
```
